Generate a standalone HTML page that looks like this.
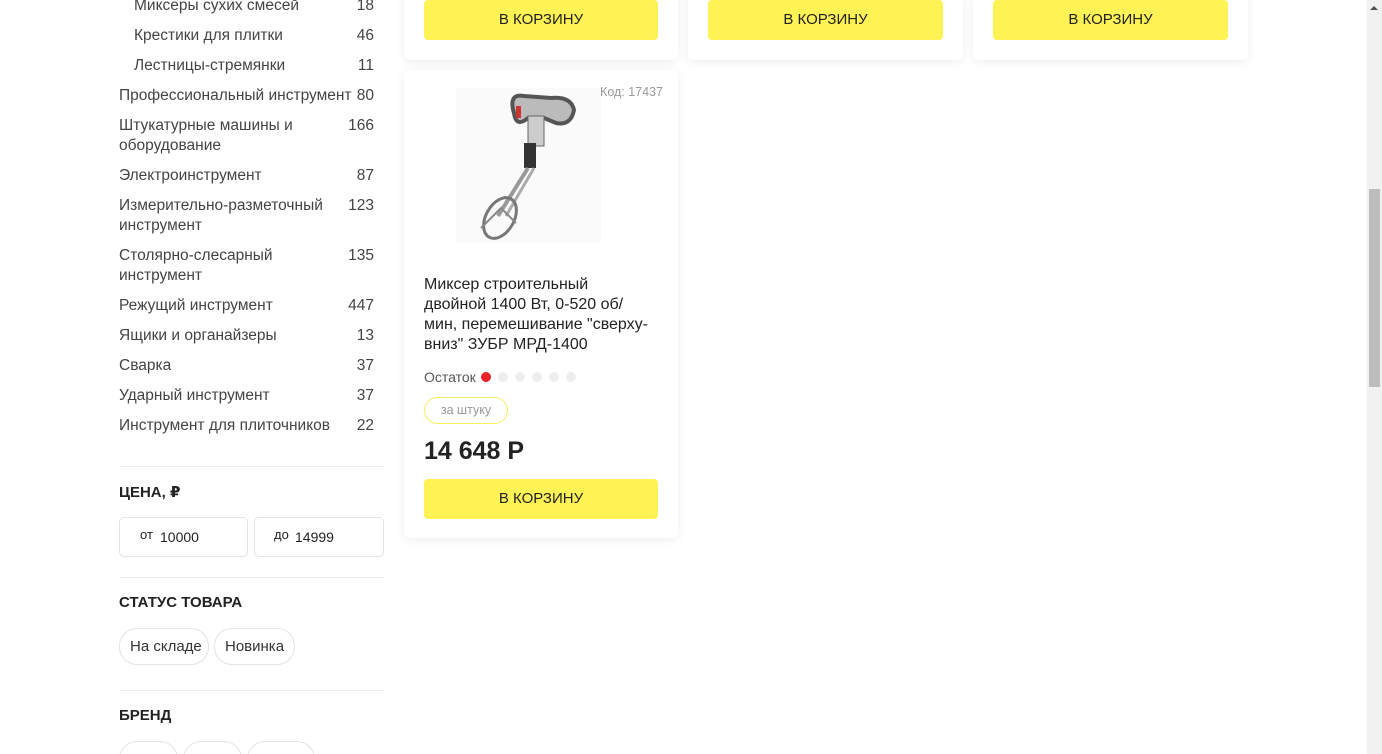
<!DOCTYPE html>
<html style="overflow:hidden;height:754px"><head><meta charset="utf-8">
<style>
*{box-sizing:border-box;margin:0;padding:0}
body{width:1382px;height:754px;overflow:hidden;background:#fff;font-family:"Liberation Sans","DejaVu Sans",sans-serif;color:#333;position:relative}
.side{position:absolute;left:119px;top:0;width:265px}
.row{position:absolute;left:0;width:255px;font-size:15.5px;line-height:20px;color:#444;white-space:nowrap}
.row .n{position:absolute;right:0;top:0}
.sub{left:15px;width:240px}
.hr{position:absolute;left:0;width:265px;height:1px;background:#ececec}
.h{position:absolute;left:0;font-size:15px;font-weight:bold;color:#222}
.inp{position:absolute;height:40px;border:1px solid #e3e3e3;border-radius:5px;font-size:14px;color:#222}
.pill{position:absolute;height:37px;border:1px solid #e3e3e3;border-radius:18px;font-size:15px;line-height:35px;padding:0 10px;color:#333;white-space:nowrap}
.card{position:absolute;background:#fff;border-radius:6px;box-shadow:0 2px 10px rgba(0,0,0,.07)}
.btn{position:absolute;height:40px;background:#fef255;border-radius:4px;font-size:15px;text-align:center;line-height:40px;color:#222}
</style></head><body>
<div class="side">
<div class="row sub" style="top:-4px">Миксеры сухих смесей<span class="n">18</span></div>
<div class="row sub" style="top:26px">Крестики для плитки<span class="n">46</span></div>
<div class="row sub" style="top:56px">Лестницы-стремянки<span class="n">11</span></div>
<div class="row" style="top:86px">Профессиональный инструмент<span class="n">80</span></div>
<div class="row" style="top:116px">Штукатурные машины и<br>оборудование<span class="n">166</span></div>
<div class="row" style="top:166px">Электроинструмент<span class="n">87</span></div>
<div class="row" style="top:196px">Измерительно-разметочный<br>инструмент<span class="n">123</span></div>
<div class="row" style="top:246px">Столярно-слесарный<br>инструмент<span class="n">135</span></div>
<div class="row" style="top:296px">Режущий инструмент<span class="n">447</span></div>
<div class="row" style="top:326px">Ящики и органайзеры<span class="n">13</span></div>
<div class="row" style="top:356px">Сварка<span class="n">37</span></div>
<div class="row" style="top:386px">Ударный инструмент<span class="n">37</span></div>
<div class="row" style="top:416px">Инструмент для плиточников<span class="n">22</span></div>
<div class="hr" style="top:466px"></div>
<div class="h" style="top:483px">ЦЕНА, ₽</div>
<div class="inp" style="left:0;top:517px;width:129px"><span style="position:absolute;left:20px;top:9px;font-size:13px">от</span><span style="position:absolute;left:40px;top:11px">10000</span></div>
<div class="inp" style="left:135px;top:517px;width:130px"><span style="position:absolute;left:19px;top:9px;font-size:13px">до</span><span style="position:absolute;left:40px;top:11px">14999</span></div>
<div class="hr" style="top:577px"></div>
<div class="h" style="top:594px">СТАТУС ТОВАРА</div>
<div class="pill" style="left:0;top:628px;width:90px">На складе</div>
<div class="pill" style="left:95px;top:628px;width:81px">Новинка</div>
<div class="hr" style="top:690px"></div>
<div class="h" style="top:707px">БРЕНД</div>
<div class="pill" style="left:0;top:741px;width:59px"></div>
<div class="pill" style="left:64px;top:741px;width:59px"></div>
<div class="pill" style="left:128px;top:741px;width:68px"></div>
</div>

<div class="card" style="left:404px;top:-10px;width:274px;height:70px"><div class="btn" style="left:20px;top:10px;width:234px">В КОРЗИНУ</div></div>
<div class="card" style="left:688px;top:-10px;width:275px;height:70px"><div class="btn" style="left:20px;top:10px;width:235px">В КОРЗИНУ</div></div>
<div class="card" style="left:973px;top:-10px;width:275px;height:70px"><div class="btn" style="left:20px;top:10px;width:235px">В КОРЗИНУ</div></div>

<div class="card" style="left:404px;top:70px;width:274px;height:468px">
<div style="position:absolute;right:15px;top:15px;font-size:12.5px;color:#999">Код: 17437</div>
<svg style="position:absolute;left:52px;top:18px" width="145" height="155" viewBox="0 0 145 155">
<rect x="0" y="0" width="145" height="155" fill="#fafafa"/>
<path d="M58 25 Q52 5 68 8 L95 10 Q115 8 118 22 Q115 38 100 35 L88 30 L72 30 Q60 40 58 25Z" fill="#bbb" stroke="#555" stroke-width="4"/>
<rect x="72" y="28" width="16" height="30" fill="#ccc" stroke="#666"/>
<rect x="68" y="55" width="12" height="25" fill="#333"/>
<line x1="72" y1="80" x2="42" y2="128" stroke="#999" stroke-width="4"/>
<line x1="78" y1="80" x2="50" y2="128" stroke="#aaa" stroke-width="3"/>
<ellipse cx="44" cy="130" rx="14" ry="22" fill="none" stroke="#777" stroke-width="3" transform="rotate(30 44 130)"/>
<path d="M25 140 L45 120 L60 135" fill="none" stroke="#888" stroke-width="2"/>
<rect x="60" y="18" width="5" height="12" fill="#c33"/>
</svg>
<div style="position:absolute;left:20px;top:205px;width:240px;font-size:16px;line-height:20px;color:#222">Миксер строительный<br>двойной 1400 Вт, 0-520 об/<br>мин, перемешивание "сверху-<br>вниз" ЗУБР МРД-1400</div>
<div style="position:absolute;left:20px;top:299px;font-size:14px;color:#555">Остаток</div>
<div style="position:absolute;left:77px;top:302px;width:10px;height:10px;border-radius:50%;background:#e8232a"></div>
<div style="position:absolute;left:94px;top:302px;width:10px;height:10px;border-radius:50%;background:#eee"></div>
<div style="position:absolute;left:111px;top:302px;width:10px;height:10px;border-radius:50%;background:#eee"></div>
<div style="position:absolute;left:128px;top:302px;width:10px;height:10px;border-radius:50%;background:#eee"></div>
<div style="position:absolute;left:145px;top:302px;width:10px;height:10px;border-radius:50%;background:#eee"></div>
<div style="position:absolute;left:162px;top:302px;width:10px;height:10px;border-radius:50%;background:#eee"></div>
<div style="position:absolute;left:20px;top:327px;width:84px;height:27px;border:1px solid #f6ef60;border-radius:14px;font-size:12.5px;color:#999;text-align:center;line-height:25px">за штуку</div>
<div style="position:absolute;left:20px;top:367px;font-size:25px;font-weight:bold;color:#222">14 648 Р</div>
<div class="btn" style="left:20px;top:409px;width:234px">В КОРЗИНУ</div>
</div>

<div style="position:absolute;left:1367px;top:0;width:15px;height:754px;background:#f1f1f1"></div>
<div style="position:absolute;left:1369px;top:189px;width:11px;height:198px;background:#bdbdbd"></div>
<div style="position:absolute;left:1370px;top:6px;width:0;height:0;border-left:4px solid transparent;border-right:4px solid transparent;border-bottom:4px solid #505050"></div>
</body></html>
